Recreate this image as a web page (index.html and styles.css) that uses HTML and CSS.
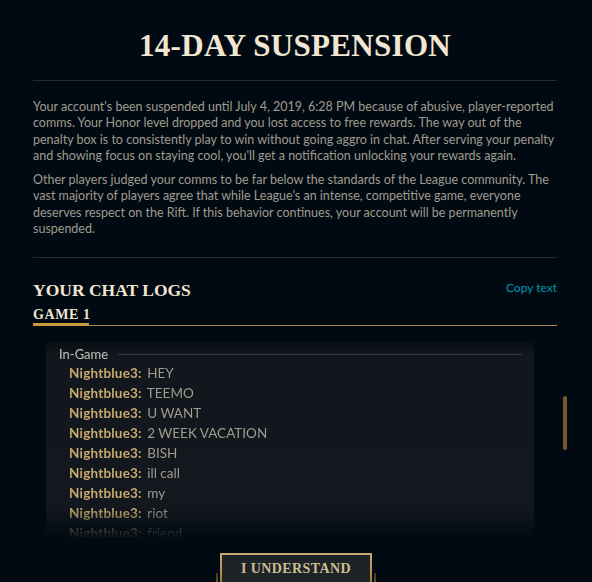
FILE: index.html
```html
<!DOCTYPE html>
<html>
<head>
<meta charset="utf-8">
<link rel="stylesheet" href="styles.css">
</head>
<body>
<div class="page">
  <h1 class="title">14-DAY SUSPENSION</h1>
  <div class="rule"></div>
  <div class="copy">
    <p>Your account's been suspended until July 4, 2019, 6:28 PM because of abusive, player-reported comms. Your Honor level dropped and you lost access to free rewards. The way out of the penalty box is to consistently play to win without going aggro in chat. After serving your penalty and showing focus on staying cool, you'll get a notification unlocking your rewards again.</p>
    <p>Other players judged your comms to be far below the standards of the League community. The vast majority of players agree that while League’s an intense, competitive game, everyone deserves respect on the Rift. If this behavior continues, your account will be permanently suspended.</p>
  </div>
  <div class="rule"></div>
  <div class="logs-head">
    <h2 class="logs-title">YOUR CHAT LOGS</h2>
    <a class="copy-link">Copy text</a>
  </div>
  <div class="tabs">
    <div class="tab">GAME 1</div>
  </div>
  <div class="chat-area">
    <div class="chat-box">
      <div class="section-head"><span>In-Game</span><i class="section-line"></i></div>
      <div class="line"><b>Nightblue3:</b> HEY</div>
      <div class="line"><b>Nightblue3:</b> TEEMO</div>
      <div class="line"><b>Nightblue3:</b> U WANT</div>
      <div class="line"><b>Nightblue3:</b> 2 WEEK VACATION</div>
      <div class="line"><b>Nightblue3:</b> BISH</div>
      <div class="line"><b>Nightblue3:</b> ill call</div>
      <div class="line"><b>Nightblue3:</b> my</div>
      <div class="line"><b>Nightblue3:</b> riot</div>
      <div class="line"><b>Nightblue3:</b> friend</div>
    </div>
    <div class="scrollbar"><div class="thumb"></div></div>
  </div>
  <div class="actions">
    <div class="btn-wrap">
      <span class="tick tick-l"></span>
      <button class="btn">I UNDERSTAND</button>
      <span class="tick tick-r"></span>
    </div>
  </div>
</div>
</body>
</html>
```
FILE: styles.css
```css
html, body {
  margin: 0;
  padding: 0;
  background: #010a13;
  height: 100%;
  overflow: hidden;
}
.page {
  padding: 0 35px 0 33px;
  font-family: Lato, "Liberation Sans", sans-serif;
}
.title {
  margin: 0;
  padding: 30px 0 19px;
  text-align: center;
  font-family: "Liberation Serif", serif;
  font-weight: bold;
  font-size: 31px;
  line-height: 31px;
  letter-spacing: 0.3px;
  color: #f0e6d2;
}
.rule {
  height: 1px;
  background: #262a30;
}
.copy {
  padding: 18px 0 20px;
}
.copy p {
  margin: 0 0 8px;
  font-size: 12.5px;
  line-height: 16.3px;
  color: #a09b8c;
}
.copy p:last-child { margin-bottom: 0; }
.logs-head {
  display: flex;
  justify-content: space-between;
  align-items: center;
  padding-top: 21px;
  height: 22px;
}
.logs-title {
  margin: 0;
  font-family: "Liberation Serif", serif;
  font-weight: bold;
  font-size: 17.5px;
  letter-spacing: 0;
  color: #f0e6d2;
}
.copy-link {
  font-size: 12px;
  color: #0397ab;
  margin-bottom: 6px;
}
.tabs {
  margin-top: 6px;
  border-bottom: 1px solid #a9884f;
  display: flex;
}
.tab {
  font-family: "Liberation Serif", serif;
  font-weight: bold;
  font-size: 14px;
  line-height: 16px;
  letter-spacing: 0.6px;
  white-space: nowrap;
  color: #f0e6d2;
  width: 56px;
  border-bottom: 3px solid #c89b3c;
  margin-bottom: -1px;
}
.chat-area {
  display: flex;
  align-items: flex-start;
  margin: 16px -11px 0 13px;
}
.chat-box {
  width: 488px;
  height: 197px;
  overflow: hidden;
  box-sizing: border-box;
  padding: 3px 12px 0 13px;
  background: linear-gradient(to bottom, #070d13 0px, #11171d 12px, #12181e 100%);
  -webkit-mask-image: linear-gradient(to bottom, #000 0, #000 84%, transparent 100%);
  mask-image: linear-gradient(to bottom, #000 0, #000 84%, transparent 100%);
}
.section-head {
  display: flex;
  align-items: center;
  gap: 10px;
  height: 18px;
  font-size: 13px;
  color: #c4c1b8;
}
.section-line {
  flex: 1;
  height: 1px;
  background: #33373d;
}
.line {
  padding-left: 10px;
  font-size: 13.5px;
  line-height: 20px;
  color: #a09b8c;
}
.line b {
  color: #c8aa6e;
  font-weight: bold;
  letter-spacing: 0.2px;
  margin-right: 2px;
}
.scrollbar {
  margin-left: 29px;
  width: 4px;
  padding-top: 54px;
}
.thumb {
  width: 4px;
  height: 54px;
  border-radius: 2px;
  background: #785a28;
}
.actions {
  display: flex;
  justify-content: center;
  margin-top: 14px;
  padding-left: 2px;
}
.btn-wrap {
  display: flex;
  align-items: flex-start;
}
.tick {
  width: 2px;
  height: 14px;
  margin-top: 20px;
  background: linear-gradient(to bottom, #463714, #785a28);
}
.tick-l { margin-right: 2px; }
.tick-r { margin-left: 2px; }
.btn {
  width: 152px;
  height: 34px;
  box-sizing: border-box;
  background: #1e2328;
  border: 2px solid #c8aa6e;
  border-image: linear-gradient(to bottom, #c8aa6e, #a17a36) 1;
  font-family: "Liberation Serif", serif;
  font-weight: bold;
  font-size: 14px;
  letter-spacing: 0.4px;
  color: #cdbe91;
  padding: 0 0 2px;
}
```
